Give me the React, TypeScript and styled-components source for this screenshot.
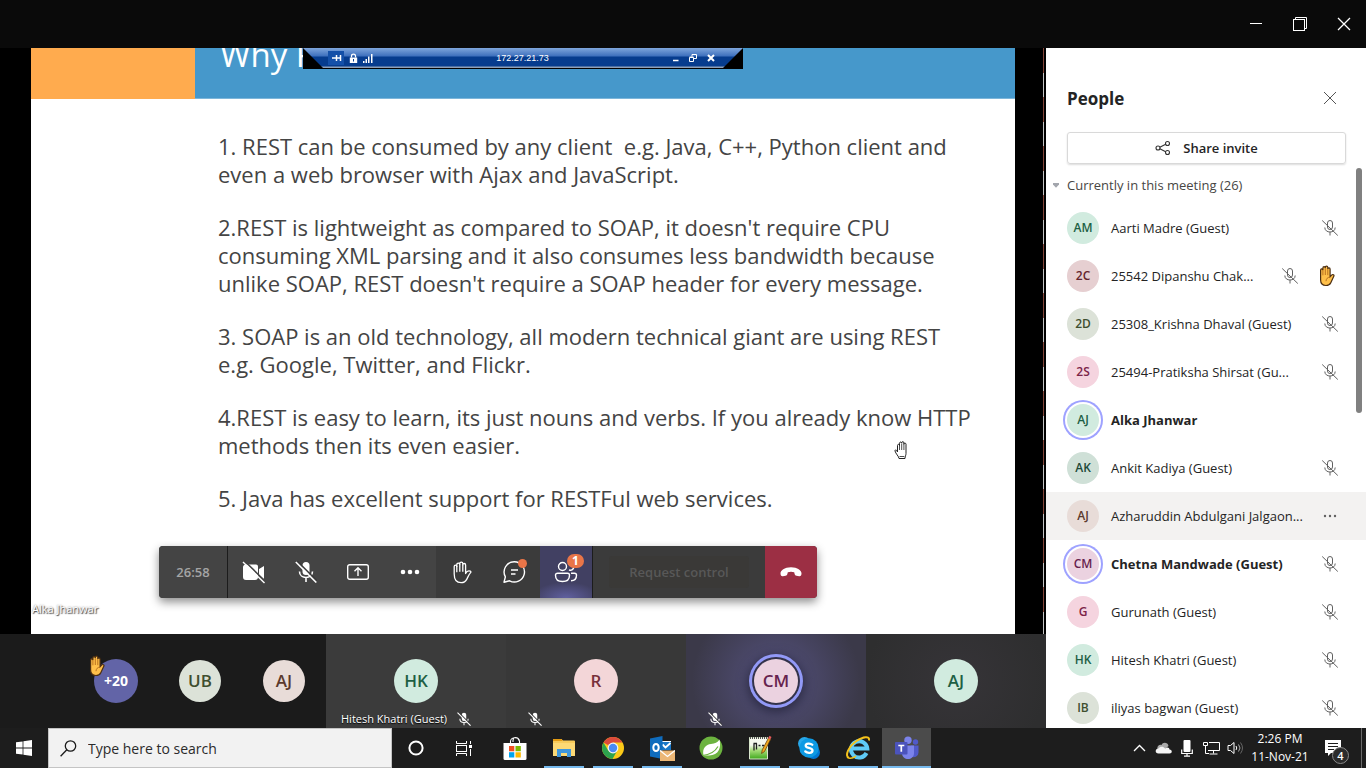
import React from "react";
import styled, { createGlobalStyle, css } from "styled-components";

const GlobalStyle = createGlobalStyle`
  * { box-sizing: border-box; }
  html, body { margin: 0; padding: 0; background: #0a0a0a; }
  body { font-family: "Open Sans", "Noto Sans", sans-serif; font-size: 13px; line-height: 20px; }
  button { font: inherit; border: 0; padding: 0; background: none; color: inherit; }
  p, h1, h2, ul, ol { margin: 0; padding: 0; list-style: none; }
  svg { display: block; flex: none; }
`;

/* ---------- page frame ---------- */

const Page = styled.div`
  display: flex;
  flex-direction: column;
  height: 100vh;
  min-height: 600px;
  overflow: hidden;
`;

const TitleBar = styled.header`
  display: flex;
  flex: none;
  justify-content: flex-end;
  align-items: center;
  height: 48px;
  background: #0a0a0a;
  color: #fff;
`;

const WindowButton = styled.button`
  display: flex;
  align-items: center;
  justify-content: center;
  width: 44px;
  height: 48px;
`;

const Workspace = styled.div`
  display: flex;
  flex: 1;
  min-height: 0;
`;

const Meeting = styled.main`
  display: flex;
  flex: 1;
  flex-direction: column;
  min-width: 0;
`;

/* ---------- shared screen ---------- */

const Stage = styled.section`
  position: relative;
  display: flex;
  flex: 1;
  min-height: 0;
  padding-left: 31px;
  background: #000;
`;

const Slide = styled.article`
  flex: 1;
  min-width: 0;
  overflow: hidden;
  background: #fff;
`;

const StageEdge = styled.div`
  flex: none;
  width: 31px;
  padding-left: 28px;

  &::before {
    content: "";
    display: block;
    width: 1px;
    height: 100%;
    background: repeating-linear-gradient(#84463a 0 25px, #c4c4c4 25px 49px);
  }
`;

const SlideHeader = styled.div`
  display: flex;
  height: 51px;
  background: #4698cb;
  border-bottom: 1px solid #7db6da;
`;

const SlideAccent = styled.div`
  flex: none;
  width: 164px;
  height: 51px;
  background: #ffab4e;
`;

const SlideTitle = styled.h1`
  height: 50px;
  padding-left: 25px;
  color: #fff;
  font-size: 33px;
  font-weight: 400;
  line-height: 14px;
`;

const SlideBody = styled.div`
  display: flex;
  flex-direction: column;
  gap: 25px;
  padding: 33px 0 0 187px;
  color: #444;
  font-size: 22px;
  line-height: 28px;
  white-space: pre;
`;

const RemoteBar = styled.div`
  position: absolute;
  top: 0;
  left: 50%;
  width: 440px;
  height: 21px;
  margin-left: -220px;
  background: #000;
`;

const RemoteBarFace = styled.div`
  display: flex;
  align-items: center;
  justify-content: space-between;
  height: 20px;
  padding: 0 28px 1px 25px;
  color: #fff;
  font: 9px/18px "Liberation Sans", sans-serif;
  background: linear-gradient(#7fa6dc 0, #3e70bd 8px, #063c8e 9px, #063c8e 18px, #8fa0b8 19px);
  clip-path: polygon(0 0, 100% 0, calc(100% - 20px) 100%, 20px 100%);
`;

const RemoteGroup = styled.div<{ $gap: number }>`
  display: flex;
  align-items: center;
  gap: ${(p) => p.$gap}px;
`;

const PresenterName = styled.span`
  position: absolute;
  left: 32px;
  bottom: 17px;
  color: #fff;
  font-size: 11px;
  line-height: 16px;
  text-shadow: 1px 1px 1px #444, 0 0 2px #777;
`;

const HandCursor = styled.span`
  position: absolute;
  left: 894px;
  top: 393px;
`;

/* ---------- call controls ---------- */

const CallBar = styled.div`
  position: absolute;
  left: 159px;
  bottom: 36px;
  display: flex;
  height: 52px;
  overflow: hidden;
  border-radius: 4px;
  background: #3b3b3b;
  box-shadow: 0 4px 10px rgba(0, 0, 0, 0.45);
  color: #fff;
`;

const Timer = styled.time`
  width: 69px;
  border-right: 1px solid #1c1c1c;
  background: #444;
  color: #a5a5a5;
  font-size: 13px;
  font-weight: 600;
  line-height: 52px;
  text-align: center;
`;

const CallButton = styled.button<{ $tone?: "light" | "active" | "leave" }>`
  position: relative;
  display: flex;
  align-items: center;
  justify-content: center;
  width: 52px;
  height: 52px;
  ${(p) => p.$tone === "light" && css`background: #444;`}
  ${(p) => p.$tone === "leave" && css`background: #9c2f44;`}
  ${(p) =>
    p.$tone === "active" &&
    css`background: radial-gradient(ellipse 34px 16px at 50% 100%, #6060a0, #41406200), #414062;`}
`;

const RequestArea = styled.div`
  display: flex;
  align-items: center;
  justify-content: center;
  width: 173px;
  border-left: 1px solid #1c1c1c;
`;

const RequestButton = styled.button`
  width: 140px;
  height: 32px;
  border-radius: 3px;
  background: #3a3937;
  color: #585858;
  font-size: 13px;
  font-weight: 600;
`;

const Dot = styled.span`
  position: absolute;
  top: 13px;
  right: 13px;
  width: 9px;
  height: 9px;
  border-radius: 50%;
  background: #e97548;
`;

const CountBadge = styled.span`
  position: absolute;
  top: 8px;
  right: 8px;
  width: 17px;
  height: 14px;
  border-radius: 7px;
  background: #e97548;
  font-size: 12px;
  font-weight: 700;
  line-height: 14px;
  text-align: center;
`;

/* ---------- participants strip ---------- */

const Strip = styled.section`
  display: flex;
  flex: none;
  height: 94px;
  background: #1b1b1b;
`;

const Overflow = styled.div`
  display: grid;
  flex: 1;
  grid-template-columns: repeat(3, 84px);
  justify-content: end;
  place-items: center;
`;

const AvatarSlot = styled.div`
  position: relative;
`;

const RaisedHand = styled.span`
  position: absolute;
  top: -4px;
  left: -7px;
`;

const Tile = styled.div<{ $bg: string }>`
  position: relative;
  display: flex;
  align-items: center;
  justify-content: center;
  width: 180px;
  background: ${(p) => p.$bg};
`;

const TileLabel = styled.span<{ $inset: number }>`
  position: absolute;
  left: ${(p) => p.$inset}px;
  bottom: 0;
  display: flex;
  align-items: center;
  gap: 10px;
  height: 18px;
  color: #fff;
  font-size: 11px;
  line-height: 18px;
  text-shadow: 0 1px 1px #000;
  white-space: nowrap;
`;

const Avatar = styled.span<{ $bg: string; $fg: string; $size?: number; $speaking?: "light" | "dark" }>`
  display: flex;
  flex: none;
  align-items: center;
  justify-content: center;
  width: ${(p) => p.$size ?? 32}px;
  height: ${(p) => p.$size ?? 32}px;
  border-radius: 50%;
  background: ${(p) => p.$bg};
  color: ${(p) => p.$fg};
  font-size: ${(p) => (p.$size ? 17 : 12)}px;
  font-weight: 600;
  ${(p) => p.$speaking === "light" && css`box-shadow: 0 0 0 2px #fff, 0 0 0 4px #9ea2ff;`}
  ${(p) => p.$speaking === "dark" && css`box-shadow: 0 0 0 2px #33324a, 0 0 0 5px #9299f7, 0 3px 12px 6px #29283f;`}
`;

const MoreAvatar = styled(Avatar)`
  font-size: 14px;
  font-weight: 700;
`;

/* ---------- people panel ---------- */

const Panel = styled.aside`
  display: flex;
  flex: none;
  flex-direction: column;
  width: 320px;
  background: #fff;
  color: #242424;
`;

const PanelHeader = styled.div`
  display: flex;
  align-items: center;
  justify-content: space-between;
  padding: 38px 28px 0 21px;
`;

const PanelTitle = styled.h2`
  padding-top: 2px;
  font-size: 17px;
  font-weight: 700;
  line-height: 22px;
`;

const PlainButton = styled.button`
  display: flex;
  align-items: center;
  justify-content: center;
  width: 16px;
  height: 16px;
  color: #555;
`;

const ShareButton = styled.button`
  display: flex;
  flex: none;
  align-items: center;
  justify-content: center;
  gap: 12px;
  height: 32px;
  margin: 22px 20px 4px 21px;
  border: 1px solid #d9d9d9;
  border-radius: 3px;
  box-shadow: 0 1px 2px rgba(0, 0, 0, 0.14);
  font-weight: 600;
`;

const ListArea = styled.div`
  position: relative;
  flex: 1;
  min-height: 0;
  overflow: hidden;
`;

const ScrollThumb = styled.span`
  position: absolute;
  top: 0;
  right: 4px;
  width: 6px;
  height: 245px;
  border-radius: 3px;
  background: #808080;
`;

const SectionToggle = styled.button`
  display: flex;
  align-items: center;
  gap: 8px;
  height: 34px;
  padding: 0 0 0 7px;
  margin-bottom: 2px;
  color: #484644;
`;

const PersonRow = styled.li<{ $hover?: boolean }>`
  display: flex;
  align-items: center;
  height: 48px;
  padding: 0 27px 0 21px;
  background: ${(p) => (p.$hover ? "#f3f2f1" : "transparent")};
`;

const PersonName = styled.span<{ $bold?: boolean }>`
  flex: 1;
  padding-left: 12px;
  min-width: 0;
  font-weight: ${(p) => (p.$bold ? 700 : 400)};
  white-space: nowrap;
`;

const RowIcons = styled.span`
  display: flex;
  flex: none;
  align-items: center;
  gap: 18px;
  color: #616161;
`;

const RowHand = styled.span`
  margin-right: 4px;
`;

/* ---------- taskbar ---------- */

const Taskbar = styled.footer`
  display: flex;
  flex: none;
  height: 40px;
  background: #1d1d1d;
  color: #fff;
`;

const TaskButton = styled.button<{ $width?: number; $open?: boolean; $active?: boolean }>`
  display: flex;
  flex: none;
  align-items: center;
  justify-content: center;
  width: ${(p) => p.$width ?? 49}px;
  height: 40px;
  ${(p) =>
    p.$open &&
    css`background: linear-gradient(#76b9ed, #76b9ed) center bottom / 40px 2px no-repeat;`}
  ${(p) =>
    p.$active &&
    css`background: linear-gradient(#76b9ed, #76b9ed) center bottom / 100% 2px no-repeat, #4b4b4b;`}
`;

const SearchBox = styled.label`
  display: flex;
  flex: none;
  align-items: center;
  gap: 11px;
  width: 344px;
  height: 40px;
  padding: 0 10px 0 11px;
  border: 1px solid #c4c4c4;
  background: #f2f2f2;
  color: #1a1a1a;
`;

const SearchInput = styled.input`
  flex: 1;
  min-width: 0;
  height: 30px;
  padding: 0;
  border: 0;
  outline: 0;
  background: none;
  font: 14px/20px "Open Sans", "Noto Sans", sans-serif;
  &::placeholder { color: #2b2b2b; opacity: 1; }
`;

const Apps = styled.nav`
  display: flex;
  flex: 1;
  min-width: 0;
  padding-left: 2px;
`;

const Tray = styled.div`
  display: flex;
  flex: none;
  align-items: center;
`;

const TrayButton = styled.button`
  display: flex;
  align-items: center;
  justify-content: center;
  width: 24px;
  height: 40px;
`;

const Clock = styled.time`
  width: 66px;
  font-size: 12px;
  line-height: 18px;
  text-align: center;
`;

const NoticeButton = styled.button`
  position: relative;
  display: flex;
  align-items: center;
  justify-content: center;
  width: 48px;
  height: 40px;
  padding-right: 8px;
`;

const NoticeCount = styled.span`
  position: absolute;
  top: 19px;
  left: 19px;
  width: 17px;
  height: 17px;
  border: 1px solid #8a8a8a;
  border-radius: 50%;
  background: #2b2b2b;
  font-size: 11px;
  font-weight: 600;
  line-height: 15px;
  text-align: center;
`;

const ShowDesktop = styled.button`
  width: 5px;
  height: 40px;
  border-left: 1px solid #6a6a6a;
`;

/* ---------- drawings ---------- */

const MicOff = () => (
  <svg width="18" height="18" viewBox="0 0 18 18" fill="none" stroke="currentColor" strokeWidth="1">
    <rect x="6.5" y="1.5" width="5" height="9" rx="2.5" />
    <path d="M3.8 8.5c0 6 10.4 6 10.4 0M9 13v3.5M1.2 1.5l15.6 15" />
  </svg>
);

const MicOffSolid = ({ size = 16 }: { size?: number }) => (
  <svg width={size} height={size} viewBox="0 0 22 22" fill="none" stroke="currentColor" strokeWidth="1.6">
    <rect x="7.5" y="1" width="7" height="13" rx="3.5" fill="currentColor" stroke="none" />
    <path d="M4.5 10.5c0 8 13 8 13 0M11 16.5V21" />
    <path d="M2.2 .2l20 20" stroke="#3a3a3a" strokeWidth="1.6" />
    <path d="M.8 1l20.5 20.5" />
  </svg>
);

const Palm = () => (
  <svg width="18" height="22" viewBox="0 0 18 22">
    <path
      d="M3.600 11V5.200c0-1.800 2.200-1.800 2.300-.1V3c0-1.800 2.400-1.800 2.400 0v-.6c0-1.800 2.500-1.800 2.500 0V4c.2-1.600 2.300-1.400 2.300.3v7.400l1.500-1.600c1.300-1.300 2.900-.2 2.200 1.200l-3 6.400c-.8 1.700-2 2.800-4.800 2.800-4 0-5.400-2.400-5.400-5.400z"
      fill="#ffc04a"
      stroke="#4d2f12"
      strokeWidth="1.2"
    />
    <path d="M5.9 5v5.300M8.300 3v7M10.800 4v6.200M13.100 12c-2.600.3-4 1.800-4.100 4.200" fill="none" stroke="#b3691a" strokeWidth=".9" />
  </svg>
);

const VideoOff = () => (
  <svg width="24" height="24" viewBox="0 0 24 24">
    <path d="M4.500 4.500H14a2 2 0 0 1 2 2V17a3 3 0 0 1-3 3H4a3 3 0 0 1-3-3V8a3 3 0 0 1 3.500-3.500zM17 9l5-3v13l-5-3.500z" fill="#fff" />
    <path d="M2.500 1l21.500 21" stroke="#444" strokeWidth="1.600" />
    <path d="M1 2l21.500 21" stroke="#fff" strokeWidth="1.400" />
  </svg>
);

const ShareScreen = () => (
  <svg width="22" height="18" viewBox="0 0 22 18" fill="none" stroke="#fff" strokeWidth="1.400">
    <rect x=".7" y="1.700" width="20.600" height="14.600" rx="2" />
    <path d="M11 13V5M7.500 8.300L11 4.800l3.500 3.500" />
  </svg>
);

const Dots = ({ r = 2.3, gap = 7, width = 20 }: { r?: number; gap?: number; width?: number }) => (
  <svg width={width} height="8" viewBox={`0 0 ${width} 8`} fill="currentColor">
    <circle cx={width / 2 - gap} cy="4" r={r} />
    <circle cx={width / 2} cy="4" r={r} />
    <circle cx={width / 2 + gap} cy="4" r={r} />
  </svg>
);

const RaiseHand = () => (
  <svg width="20" height="23" viewBox="0 0 20 23" fill="none" stroke="#fff" strokeWidth="1.300" strokeLinejoin="round">
    <path d="M2.200 13V5.500c0-1.800 2.600-1.800 2.600 0V3.400c0-1.800 3-1.800 3 0v-.9c0-1.900 3-1.900 3 0v1.300c0-1.800 2.800-1.700 2.800.1v8.600c1-2 2.400-3.200 4.700-2.300.7.300.8.900.3 1.400-1.800 1.800-2.600 4.300-3.900 6.800-1.200 2.400-2.900 3.300-5.600 3.300-4.600 0-6.900-3.200-6.900-8.700z" />
    <path d="M4.800 5v6.200M7.800 3.500v7.200M10.800 3.500v7.200" />
  </svg>
);

const Chat = () => (
  <svg width="24" height="24" viewBox="0 0 24 24" fill="none" stroke="#fff" strokeWidth="1.400" strokeLinejoin="round">
    <path d="M12.300 1.800a10.100 10.100 0 1 1-4.700 19L2 22.200l1.400-5.400a10.100 10.100 0 0 1 8.900-15z" />
    <path d="M9 10h7M9 14h4.500" />
  </svg>
);

const PeopleIcon = () => (
  <svg width="24" height="22" viewBox="0 0 24 22" fill="none" stroke="#fff" strokeWidth="1.400">
    <circle cx="8.500" cy="5.500" r="4" />
    <path d="M3.500 12.200h10a2 2 0 0 1 2 2c0 4.500-2.500 6.300-7 6.300s-7-1.800-7-6.300a2 2 0 0 1 2-2z" />
    <path d="M14.500 3.200a3.300 3.300 0 1 1 .5 5.600M17 12.200h3.500a2 2 0 0 1 2 2c0 3.800-2 5.500-5.500 5.500" />
  </svg>
);

const HangUp = () => (
  <svg width="22" height="10" viewBox="0 0 22 10">
    <path d="M11 .3C17.500.3 21.600 3.400 21.500 6.600c0 1.800-.8 2.800-2.300 2.600l-2.700-.4c-1.300-.2-1.800-1-2-2.200l-.3-1.400c-2-.7-4.400-.7-6.400 0l-.3 1.400c-.2 1.200-.7 2-2 2.200l-2.700.4C1.300 9.400.5 8.400.5 6.600.4 3.400 4.500.3 11 .3z" fill="#fff" />
  </svg>
);

const PointerHand = () => (
  <svg width="15" height="19" viewBox="0 0 15 19">
    <path d="M3.500 11V4.500c0-1.600 2-1.600 2 0V2.300c0-1.700 2.200-1.700 2.200 0v-.4c0-1.700 2.200-1.700 2.200 0v1.300c0-1.500 2.100-1.500 2.100 0v9.300c0 2-1 2.500-1 5H5c0-2-3.500-5-4-7.500-.2-1.600 1.700-1.500 2.500 1z" fill="#fff" stroke="#222" strokeWidth="1" />
    <path d="M5.500 4v5M7.700 3v6M9.900 3v6M5.500 15.500h4.800" stroke="#222" strokeWidth=".8" />
  </svg>
);

const CloseIcon = ({ width = 1 }: { width?: number }) => (
  <svg width="14" height="14" viewBox="0 0 14 14" stroke="currentColor" strokeWidth={width}>
    <path d="M1 1l12 12M13 1L1 13" />
  </svg>
);

const ShareNodes = () => (
  <svg width="16" height="16" viewBox="0 0 16 16" fill="none" stroke="#333" strokeWidth="1.100">
    <circle cx="3" cy="8" r="2" />
    <circle cx="12.500" cy="3.500" r="2" />
    <circle cx="12.500" cy="12.500" r="2" />
    <path d="M4.800 7.200l5.900-2.900M4.800 8.800l5.900 2.900" />
  </svg>
);

const Windows = () => (
  <svg width="16" height="16" viewBox="0 0 16 16" fill="#fff">
    <path d="M0 2.300L6.600 1.400v6.200H0zM7.400 1.300L16 0v7.600H7.400zM0 8.400h6.600v6.200L0 13.700zM7.400 8.400H16V16l-8.600-1.300z" />
  </svg>
);

const SearchIcon = () => (
  <svg width="17" height="17" viewBox="0 0 17 17" fill="none" stroke="#1a1a1a" strokeWidth="1.300">
    <circle cx="10.500" cy="6" r="5.200" />
    <path d="M6.800 9.800L.6 16.300" />
  </svg>
);

const Cortana = () => (
  <svg width="18" height="18" viewBox="0 0 18 18">
    <circle cx="9" cy="9" r="6.600" fill="none" stroke="#fff" strokeWidth="2" />
  </svg>
);

const TaskView = () => (
  <svg width="18" height="17" viewBox="0 0 18 17" fill="none" stroke="#fff" strokeWidth="1">
    <path d="M1.500 1v2.500h10V1M1.500 16v-2.500h10V16" />
    <rect x="1.500" y="5.500" width="10" height="6" />
    <path d="M15.500 1v3M15.500 9v7" />
    <path d="M14 5h3v3h-3z" fill="#fff" stroke="none" />
  </svg>
);

const Store = () => (
  <svg width="24" height="24" viewBox="0 0 24 24">
    <path d="M7.500 7V5.500c0-5 9-5 9 0V7M10 6V4.500c0-4 5-4 6 0" fill="none" stroke="#fff" strokeWidth="1.100" />
    <path d="M.5 7h23v15.500a1.500 1.500 0 0 1-1.500 1.500H2A1.500 1.500 0 0 1 .5 22.500z" fill="#fff" />
    <path d="M6 10h5.300v5.300H6z" fill="#f25022" />
    <path d="M12.500 10h5.300v5.300h-5.300z" fill="#7fba00" />
    <path d="M6 16.200h5.300v5.300H6z" fill="#00a4ef" />
    <path d="M12.500 16.200h5.300v5.300h-5.300z" fill="#ffb900" />
  </svg>
);

const Folder = () => (
  <svg width="24" height="20" viewBox="0 0 24 20">
    <path d="M1 1h8.500l1.500 1.500H22a1 1 0 0 1 1 1V18H1z" fill="#f7cb5b" />
    <path d="M1 1h8.500l1 2H1z" fill="#e39b13" />
    <path d="M1 5h22v13H1z" fill="#fcd975" />
    <path d="M5 19v-8h14v8h-4v-4H9v4z" fill="#3f97dc" />
  </svg>
);

const Chrome = () => (
  <svg width="24" height="24" viewBox="0 0 24 24">
    <circle cx="12" cy="12" r="11" fill="#fbc918" />
    <path d="M12 12L2.500 6.500A11 11 0 0 1 21.500 6.500H12z" fill="#dc4a3c" />
    <path d="M2.500 6.500A11 11 0 0 0 11.500 23l4.800-8.500L12 12 7.300 14.700z" fill="#2da44e" />
    <circle cx="12" cy="12" r="5.400" fill="#f4f4f4" />
    <circle cx="12" cy="12" r="4.200" fill="#4a8af4" />
  </svg>
);

const Outlook = () => (
  <svg width="26" height="26" viewBox="0 0 26 26">
    <path d="M12 6h10v9H12z" fill="#fff" />
    <path d="M13 7h9v8h-9z" fill="#1a78c8" />
    <path d="M13.500 9.500l3 3L21.500 8" fill="none" stroke="#fff" strokeWidth="1.800" />
    <path d="M1 3.500L13.500 1v23L1 21.500z" fill="#0f6cbd" />
    <ellipse cx="7" cy="12.500" rx="2.700" ry="3.600" fill="none" stroke="#fff" strokeWidth="2" />
    <path d="M11 15.500h15V26H11z" fill="#ecb776" />
    <path d="M11 15.500l7.500 6 7.500-6" fill="none" stroke="#fff" strokeWidth="1.300" />
  </svg>
);

const Leaf = () => (
  <svg width="24" height="24" viewBox="0 0 24 24">
    <circle cx="12" cy="12" r="11.500" fill="#6cb33f" />
    <path d="M20.500 3.500c2 7.500-.5 16-10.500 16H4.500C3 12 7 8.500 12 8c4-.4 6.500-1.500 8.500-4.500z" fill="#fff" />
    <path d="M3.500 19.500c6-.5 12-3 15.500-9" fill="none" stroke="#6cb33f" strokeWidth="1.200" />
  </svg>
);

const Notepad = () => (
  <svg width="24" height="26" viewBox="0 0 24 26">
    <defs>
      <linearGradient id="pad" x1="0" y1="0" x2="0" y2="1">
        <stop offset=".35" stopColor="#f6f8ee" />
        <stop offset=".6" stopColor="#a5dc78" />
        <stop offset="1" stopColor="#3fa81c" />
      </linearGradient>
    </defs>
    <path d="M1.500 2.500h18v21.500h-18z" fill="url(#pad)" stroke="#d8e6cc" />
    <path d="M2 3h17" stroke="#555" strokeWidth="2" strokeDasharray="1 1" />
    <path d="M6 8.500v7M8.500 8.500v6M5.500 8.500H9M10.500 10.500h2M14 10.500h2" stroke="#222" strokeWidth="1.300" />
    <path d="M20.500 3l2 1.500-6 12-3 2 .8-3.800z" fill="#f2a81d" stroke="#6b4410" strokeWidth=".8" />
    <path d="M20 3.500L21.500.8 23.500 2l-1.200 2.500z" fill="#e65a5a" />
  </svg>
);

const Skype = () => (
  <svg width="24" height="24" viewBox="0 0 24 24">
    <circle cx="7.500" cy="7.500" r="6.500" fill="#28a8ea" />
    <circle cx="16.500" cy="16.500" r="6.500" fill="#0078d4" />
    <circle cx="12" cy="12" r="9.700" fill="#0d9ae4" />
    <path d="M15.300 8.800C13.500 7 8.600 7 8.700 9.800c0 2.800 6.800 1.500 6.800 4.700 0 2.900-5.200 3-7.200.9" fill="none" stroke="#fff" strokeWidth="2.300" strokeLinecap="round" />
  </svg>
);

const Explorer = () => (
  <svg width="26" height="26" viewBox="0 0 26 26" fill="none">
    <path d="M21.500 18a8.200 8.200 0 1 1 .8-4.500H7.500" stroke="#5fcbf7" strokeWidth="4" />
    <path d="M4 23C-1 21 4 11 11.500 6 18 1.500 25 .5 24 5.500" stroke="#f5c21b" strokeWidth="2" />
    <path d="M4 23c2 .8 4.500-.2 7-1.800" stroke="#f5c21b" strokeWidth="1.500" />
  </svg>
);

const Teams = () => (
  <svg width="26" height="24" viewBox="0 0 26 24">
    <circle cx="21.500" cy="6" r="2.700" fill="#5059c9" />
    <path d="M17 9.500h7.500v7a4.500 4.500 0 0 1-7.500 3.500z" fill="#5059c9" />
    <circle cx="14" cy="4.200" r="3.700" fill="#7b83eb" />
    <path d="M8 9.500h12V17c0 8-12 8-12 0z" fill="#7b83eb" />
    <rect x="1" y="6" width="12.500" height="12.500" rx="1" fill="#4b53bc" />
    <path d="M4.300 9.500h6M7.300 9.500v6.300" stroke="#fff" strokeWidth="1.700" />
  </svg>
);

/* ---------- data ---------- */

const SLIDE_POINTS = [
  "1. REST can be consumed by any client  e.g. Java, C++, Python client and\neven a web browser with Ajax and JavaScript.",
  "2.REST is lightweight as compared to SOAP, it doesn't require CPU\nconsuming XML parsing and it also consumes less bandwidth because\nunlike SOAP, REST doesn't require a SOAP header for every message.",
  "3. SOAP is an old technology, all modern technical giant are using REST\ne.g. Google, Twitter, and Flickr.",
  "4.REST is easy to learn, its just nouns and verbs. If you already know HTTP\nmethods then its even easier.",
  "5. Java has excellent support for RESTFul web services.",
];

type Person = {
  initials: string;
  name: string;
  bg: string;
  fg: string;
  status?: "muted" | "raised" | "menu";
  speaking?: boolean;
};

const PEOPLE: Person[] = [
  { initials: "AM", name: "Aarti Madre (Guest)", bg: "#d1ebdf", fg: "#1d6044", status: "muted" },
  { initials: "2C", name: "25542 Dipanshu Chak...", bg: "#e6cfd1", fg: "#64252d", status: "raised" },
  { initials: "2D", name: "25308_Krishna Dhaval (Guest)", bg: "#dce2d8", fg: "#3f4f2f", status: "muted" },
  { initials: "2S", name: "25494-Pratiksha Shirsat (Gu...", bg: "#f5d4df", fg: "#7c2348", status: "muted" },
  { initials: "AJ", name: "Alka Jhanwar", bg: "#d1ebdf", fg: "#1d6044", speaking: true },
  { initials: "AK", name: "Ankit Kadiya (Guest)", bg: "#cfe0d7", fg: "#1d4a38", status: "muted" },
  { initials: "AJ", name: "Azharuddin Abdulgani Jalgaon...", bg: "#e8dcd8", fg: "#5b3a2d", status: "menu" },
  { initials: "CM", name: "Chetna Mandwade (Guest)", bg: "#ebd2e0", fg: "#66224e", status: "muted", speaking: true },
  { initials: "G", name: "Gurunath (Guest)", bg: "#f5d4df", fg: "#7c2348", status: "muted" },
  { initials: "HK", name: "Hitesh Khatri (Guest)", bg: "#d1ebdf", fg: "#1d6044", status: "muted" },
  { initials: "IB", name: "iliyas bagwan (Guest)", bg: "#dce2d8", fg: "#3f4f2f", status: "muted" },
];

export default function App() {
  return (
    <Page>
      <GlobalStyle />
      <TitleBar>
        <WindowButton aria-label="Minimize">
          <svg width="12" height="12" viewBox="0 0 12 12" stroke="#fff"><path d="M0 5.500h12" /></svg>
        </WindowButton>
        <WindowButton aria-label="Restore">
          <svg width="14" height="14" viewBox="0 0 14 14" fill="none" stroke="#fff">
            <rect x=".5" y="2.500" width="11" height="11" />
            <path d="M2.500 2.500v-2h11v11h-2" />
          </svg>
        </WindowButton>
        <WindowButton aria-label="Close"><CloseIcon width={1.3} /></WindowButton>
      </TitleBar>

      <Workspace>
        <Meeting>
          <Stage>
            <Slide>
              <SlideHeader>
                <SlideAccent />
                <SlideTitle>Why REST</SlideTitle>
              </SlideHeader>
              <SlideBody>
                {SLIDE_POINTS.map((point) => <p key={point}>{point}</p>)}
              </SlideBody>
            </Slide>
            <StageEdge />
            <RemoteBar>
              <RemoteBarFace>
                <RemoteGroup $gap={5}>
                  <svg width="16" height="14" viewBox="0 0 16 14" fill="none" stroke="#fff">
                    <rect x="0" y="0" width="16" height="14" fill="#1450a8" stroke="none" />
                    <path d="M4 7h4M8.500 4v6M9 7h4M12.500 4v6" strokeWidth="1.500" />
                  </svg>
                  <svg width="9" height="10" viewBox="0 0 9 10">
                    <path d="M2.500 4.500V3c0-2.500 4-2.500 4 0v1.500" fill="none" stroke="#fff" strokeWidth="1.300" />
                    <path d="M.8 4.500h7.400V10H.8z" fill="#fff" />
                    <path d="M4.500 6v2.500" stroke="#063c8e" />
                  </svg>
                  <svg width="10" height="10" viewBox="0 0 10 10" fill="#fff">
                    <path d="M0 8h1.500v2H0zM2.500 6H4v4H2.500zM5 3.500h1.500V10H5zM8 1h1.500v9H8z" />
                  </svg>
                </RemoteGroup>
                <span>172.27.21.73</span>
                <RemoteGroup $gap={10}>
                  <svg width="7" height="8" viewBox="0 0 7 8" stroke="#fff" strokeWidth="1.600"><path d="M1 6.500h5.500" /></svg>
                  <svg width="8" height="8" viewBox="0 0 8 8" fill="none" stroke="#fff"><path d="M.5 3.500h4v4h-4zM.5 3h4M3 2.500v-2h4.500v4H5" /></svg>
                  <svg width="8" height="8" viewBox="0 0 8 8" stroke="#fff" strokeWidth="2"><path d="M1 1l6 6M7 1L1 7" /></svg>
                </RemoteGroup>
              </RemoteBarFace>
            </RemoteBar>
            <HandCursor><PointerHand /></HandCursor>
            <PresenterName>Alka Jhanwar</PresenterName>
            <CallBar>
              <Timer>26:58</Timer>
              <CallButton $tone="light" aria-label="Turn camera on"><VideoOff /></CallButton>
              <CallButton $tone="light" aria-label="Unmute"><MicOffSolid size={22} /></CallButton>
              <CallButton $tone="light" aria-label="Share content"><ShareScreen /></CallButton>
              <CallButton $tone="light" aria-label="More actions"><Dots /></CallButton>
              <CallButton aria-label="Raise hand"><RaiseHand /></CallButton>
              <CallButton aria-label="Show conversation"><Chat /><Dot /></CallButton>
              <CallButton $tone="active" aria-label="Show participants">
                <PeopleIcon />
                <CountBadge>1</CountBadge>
              </CallButton>
              <RequestArea><RequestButton disabled>Request control</RequestButton></RequestArea>
              <CallButton $tone="leave" aria-label="Leave"><HangUp /></CallButton>
            </CallBar>
          </Stage>

          <Strip>
            <Overflow>
              <AvatarSlot>
                <MoreAvatar $bg="#6264a7" $fg="#fff" $size={44}>+20</MoreAvatar>
                <RaisedHand><Palm /></RaisedHand>
              </AvatarSlot>
              <Avatar $bg="#dce2d8" $fg="#3f4f2f" $size={42}>UB</Avatar>
              <Avatar $bg="#e8dcd8" $fg="#5b3a2d" $size={42}>AJ</Avatar>
            </Overflow>
            <Tile $bg="#3b3b3b">
              <Avatar $bg="#d1ebdf" $fg="#1d6044" $size={44}>HK</Avatar>
              <TileLabel $inset={15}>Hitesh Khatri (Guest)<MicOffSolid size={14} /></TileLabel>
            </Tile>
            <Tile $bg="#383838">
              <Avatar $bg="#f3d6d8" $fg="#77303a" $size={44}>R</Avatar>
              <TileLabel $inset={22}><MicOffSolid size={14} /></TileLabel>
            </Tile>
            <Tile $bg="radial-gradient(circle 84px at 50% 50%, #55527f, #3b3949)">
              <Avatar $bg="#ebd2e0" $fg="#66224e" $size={44} $speaking="dark">CM</Avatar>
              <TileLabel $inset={22}><MicOffSolid size={14} /></TileLabel>
            </Tile>
            <Tile $bg="radial-gradient(circle 90px at 50% 50%, #363438, #2e2e2f)">
              <Avatar $bg="#d1ebdf" $fg="#1d6044" $size={44}>AJ</Avatar>
            </Tile>
          </Strip>
        </Meeting>

        <Panel>
          <PanelHeader>
            <PanelTitle>People</PanelTitle>
            <PlainButton aria-label="Close people panel"><CloseIcon /></PlainButton>
          </PanelHeader>
          <ShareButton><ShareNodes />Share invite</ShareButton>
          <ListArea>
            <SectionToggle>
              <svg width="6" height="5" viewBox="0 0 6 5"><path d="M0 0h6v1.500L3 4.800 0 1.500z" fill="#a3a6ad" /></svg>
              Currently in this meeting (26)
            </SectionToggle>
            <ul>
              {PEOPLE.map((p) => (
                <PersonRow key={p.name} $hover={p.status === "menu"}>
                  <Avatar $bg={p.bg} $fg={p.fg} $speaking={p.speaking ? "light" : undefined}>{p.initials}</Avatar>
                  <PersonName $bold={p.speaking}>{p.name}</PersonName>
                  <RowIcons>
                    {(p.status === "muted" || p.status === "raised") && <MicOff />}
                    {p.status === "raised" && <RowHand><Palm /></RowHand>}
                    {p.status === "menu" && <Dots r={1.2} gap={5} width={18} />}
                  </RowIcons>
                </PersonRow>
              ))}
            </ul>
            <ScrollThumb />
          </ListArea>
        </Panel>
      </Workspace>

      <Taskbar>
        <TaskButton $width={48} aria-label="Start"><Windows /></TaskButton>
        <SearchBox>
          <SearchIcon />
          <SearchInput type="text" aria-label="Search" placeholder="Type here to search" />
        </SearchBox>
        <TaskButton $width={48} aria-label="Cortana"><Cortana /></TaskButton>
        <TaskButton $width={48} aria-label="Task view"><TaskView /></TaskButton>
        <Apps>
          <TaskButton aria-label="Store"><Store /></TaskButton>
          <TaskButton $open aria-label="File Explorer"><Folder /></TaskButton>
          <TaskButton $open aria-label="Chrome"><Chrome /></TaskButton>
          <TaskButton $open aria-label="Outlook"><Outlook /></TaskButton>
          <TaskButton aria-label="Spring Tools"><Leaf /></TaskButton>
          <TaskButton $open aria-label="Notepad++"><Notepad /></TaskButton>
          <TaskButton $open aria-label="Skype"><Skype /></TaskButton>
          <TaskButton $open aria-label="Internet Explorer"><Explorer /></TaskButton>
          <TaskButton $active aria-label="Teams"><Teams /></TaskButton>
        </Apps>
        <Tray>
          <TrayButton aria-label="Hidden icons">
            <svg width="13" height="8" viewBox="0 0 13 8" fill="none" stroke="#fff" strokeWidth="1.300"><path d="M1 7l5.500-5.500L12 7" /></svg>
          </TrayButton>
          <TrayButton aria-label="OneDrive">
            <svg width="17" height="12" viewBox="0 0 17 12">
              <path d="M3 8C1 5 4 2 6.500 3 8-.5 13 .5 13.500 4l-5 4z" fill="#a9a9a9" />
              <path d="M3.500 11.500C-.5 11.500 0 6.500 3.500 6.500 5 4 8.500 4 10 6.500c2-2 4.500-1 4.500 1 3 0 3 4 0 4z" fill="#f4f4f4" />
            </svg>
          </TrayButton>
          <TrayButton aria-label="Microphone">
            <svg width="12" height="17" viewBox="0 0 12 17">
              <rect x="2.500" y="0" width="7" height="12" rx="1" fill="#fff" />
              <path d="M.7 9.500v4h10.600v-4M6 13.500V16M3 16.200h6" fill="none" stroke="#fff" strokeWidth="1.200" />
            </svg>
          </TrayButton>
          <TrayButton aria-label="Network">
            <svg width="17" height="14" viewBox="0 0 17 14" fill="none" stroke="#fff">
              <path d="M6 1.500h10.500v8H5M10.500 9.500v3M6.500 13h8" />
              <path d="M.5 1.500h4v3h-4zM2.500 4.500v8H6" />
            </svg>
          </TrayButton>
          <TrayButton aria-label="Volume">
            <svg width="17" height="14" viewBox="0 0 17 14" fill="none" stroke="#fff">
              <path d="M1 4.500h2.500l3.500-3v11l-3.500-3H1z" />
              <path d="M9 5q1.500 2 0 4" />
              <path d="M11.500 3.500q3 3.500 0 7" stroke="#aaa" />
              <path d="M13.500 1.500q4 5.500 0 11" stroke="#666" />
            </svg>
          </TrayButton>
          <Clock>2:26 PM<br />11-Nov-21</Clock>
          <NoticeButton aria-label="Notifications">
            <svg width="18" height="18" viewBox="0 0 18 18">
              <path d="M1 1h16v13H7l-3 3v-3H1z" fill="#fff" />
              <path d="M4 4.500h10M4 7.500h10M4 10.500h6" stroke="#1d1d1d" />
            </svg>
            <NoticeCount>4</NoticeCount>
          </NoticeButton>
          <ShowDesktop aria-label="Show desktop" />
        </Tray>
      </Taskbar>
    </Page>
  );
}
